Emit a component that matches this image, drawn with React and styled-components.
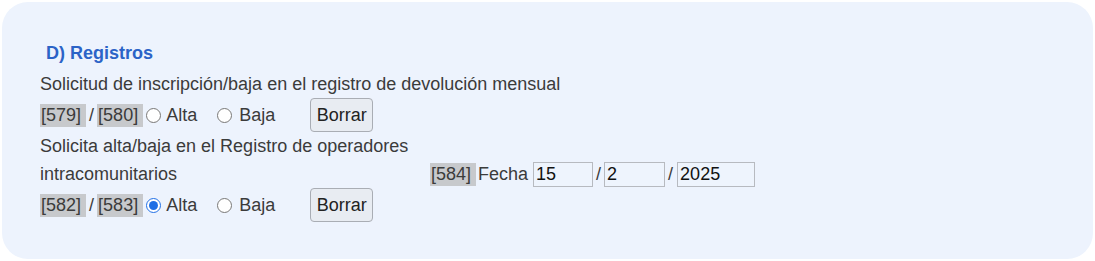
import styled, { createGlobalStyle } from "styled-components";

const GlobalStyle = createGlobalStyle`
  body {
    margin: 0;
    background: #ffffff;
    font-family: "Liberation Sans", Arial, sans-serif;
  }
`;

const Card = styled.section`
  box-sizing: border-box;
  margin: 2px;
  width: 1091px;
  height: 257px;
  border-radius: 26px;
  background: #edf3fd;
  padding: 37px 0 0 38px;
  color: #3b3b3b;
  font-size: 18px;
  line-height: 28px;
`;

const Title = styled.h3`
  margin: 0 0 3px 6px;
  font-size: 18px;
  line-height: 28px;
  font-weight: bold;
  color: #2b63c7;
`;

const Text = styled.div`
  margin: 0;
`;

const Row = styled.div`
  display: flex;
  align-items: center;
  height: 34px;
`;

const Tag = styled.span`
  display: inline-block;
  background: #c7c9cc;
  line-height: 23px;
  padding: 0 5px 0 1px;
`;

const Slash = styled.span`
  margin: 0 3px;
`;

const Radio = styled.input.attrs({ type: "radio" })`
  width: 15px;
  height: 15px;
  margin: 0 ${(p) => p.$gap || 5}px 0 ${(p) => p.$lead ?? 3}px;
  accent-color: #1f6fe5;
`;

const Label = styled.label`
  display: inline-flex;
  align-items: center;
  margin-right: ${(p) => p.$after || 0}px;
`;

const Button = styled.button`
  box-sizing: border-box;
  height: 34px;
  width: 63px;
  padding: 0;
  border: 1px solid #a9adb4;
  border-radius: 4px;
  background: #e8ecf2;
  color: #222;
  font-family: inherit;
  font-size: 18px;
`;

const Split = styled.div`
  display: grid;
  grid-template-columns: 390px auto;
  align-items: end;
`;

const DateField = styled.div`
  display: flex;
  align-items: center;
  height: 28px;
`;

const Caption = styled.span`
  margin: 0 5px 0 2px;
`;

const DateInput = styled.input`
  box-sizing: border-box;
  width: ${(p) => p.$w}px;
  height: 25px;
  padding: 0 2px;
  border: 1px solid #b7bac0;
  background: #eef4fd;
  color: #111;
  font-family: inherit;
  font-size: 18px;
`;

const DateSep = styled.span`
  margin: 0 ${(p) => p.$r || 3}px 0 3px;
`;

const ChoiceRow = ({ a, b, checked, name }) => (
  <Row>
    <Tag>[{a}]</Tag>
    <Slash>/</Slash>
    <Tag>[{b}]</Tag>
    <Label $after={20}>
      <Radio name={name} defaultChecked={checked === "alta"} />
      Alta
    </Label>
    <Label $after={35}>
      <Radio name={name} $lead={0} $gap={7} defaultChecked={checked === "baja"} />
      Baja
    </Label>
    <Button type="button">Borrar</Button>
  </Row>
);

export default function App() {
  return (
    <>
      <GlobalStyle />
      <Card>
        <Title>D) Registros</Title>
        <Text>Solicitud de inscripción/baja en el registro de devolución mensual</Text>
        <ChoiceRow a="579" b="580" name="mensual" />
        <Split>
          <Text>Solicita alta/baja en el Registro de operadores intracomunitarios</Text>
          <DateField>
            <Tag>[584]</Tag>
            <Caption>Fecha</Caption>
            <DateInput $w={60} defaultValue="15" />
            <DateSep>/</DateSep>
            <DateInput $w={61} defaultValue="2" />
            <DateSep $r={4}>/</DateSep>
            <DateInput $w={78} defaultValue="2025" />
          </DateField>
        </Split>
        <ChoiceRow a="582" b="583" name="intra" checked="alta" />
      </Card>
    </>
  );
}
